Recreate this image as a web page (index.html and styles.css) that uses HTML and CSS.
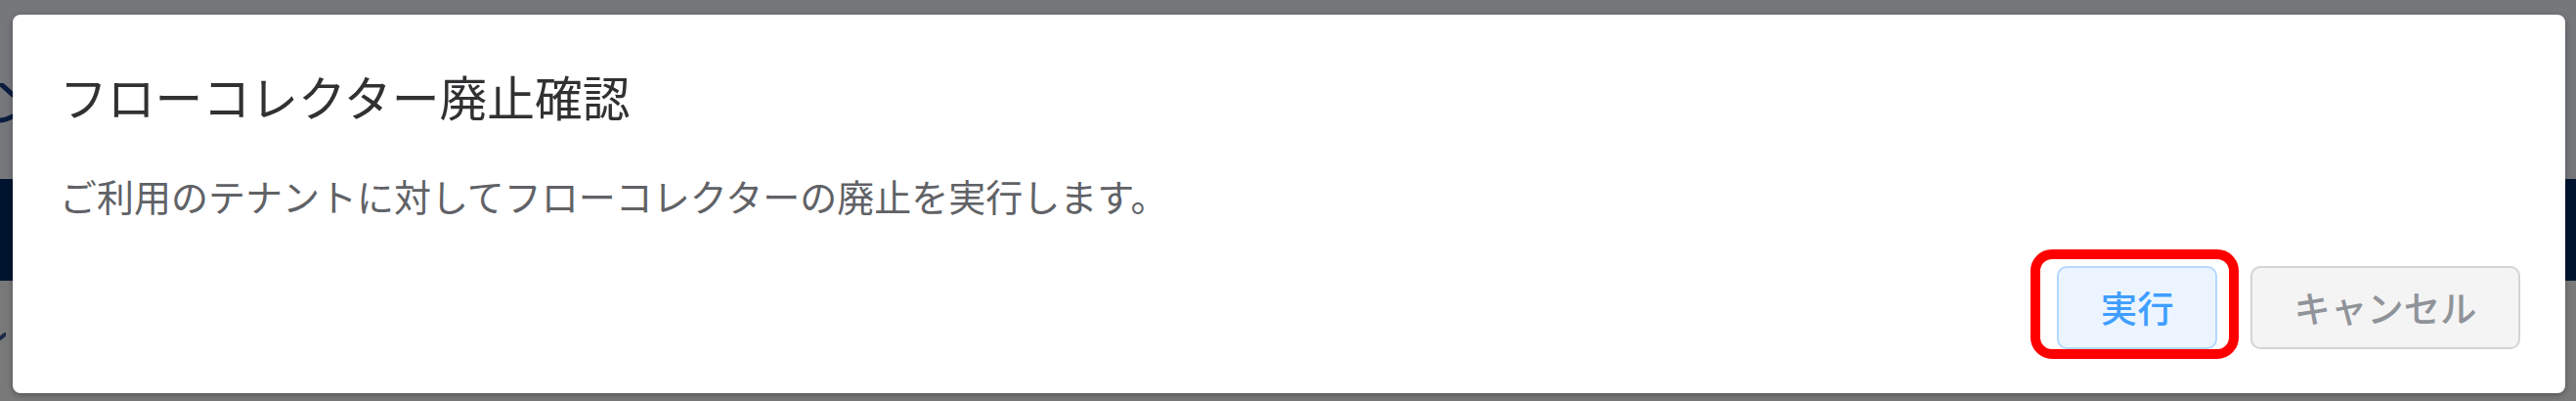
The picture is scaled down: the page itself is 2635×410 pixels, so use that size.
FILE: index.html
```html
<!DOCTYPE html>
<html lang="ja">
<head>
<meta charset="utf-8">
<title>フローコレクター廃止確認</title>
<link rel="stylesheet" href="styles.css">
</head>
<body>
<div class="screen">
  <div class="app">
    <div class="app-top">
      <svg class="frag" width="13" height="42" viewBox="0 0 13 42"><path d="M1 1 L13 12" stroke="#0b1d3f" stroke-width="5" fill="none" stroke-linecap="round"/><path d="M0 38 Q6 38 13 34" stroke="#0b1d3f" stroke-width="5" fill="none" stroke-linecap="round"/></svg>
    </div>
    <div class="app-band"></div>
    <div class="app-bottom">
      <svg class="frag" width="6" height="8" viewBox="0 0 6 8"><path d="M0 6 L5 2" stroke="#1b2a48" stroke-width="4" fill="none" stroke-linecap="round"/></svg>
    </div>
  </div>
  <div class="dialog">
    <div class="dialog-title">フローコレクター廃止確認</div>
    <div class="dialog-body">ご利用のテナントに対してフローコレクターの廃止を実行します。</div>
    <div class="dialog-footer">
      <div class="btn-wrap">
        <button class="btn btn-primary">実行</button>
        <span class="highlight"></span>
      </div>
      <button class="btn btn-info">キャンセル</button>
    </div>
  </div>
</div>
</body>
</html>
```

FILE: styles.css
```css
html, body {
  margin: 0;
  padding: 0;
}
body {
  width: 2635px;
  height: 410px;
  overflow: hidden;
  font-family: "Noto Sans CJK JP", "Noto Sans", sans-serif;
}
.screen {
  position: relative;
  width: 2635px;
  height: 410px;
}
.app {
  display: flex;
  flex-direction: column;
  height: 100%;
}
.app-top {
  height: 183px;
  box-sizing: border-box;
  padding-top: 85px;
  background: #76777b;
}
.app-band {
  height: 104px;
  background: #00132f;
}
.app-bottom {
  flex: 1;
  box-sizing: border-box;
  padding-top: 53px;
  background: #797979;
}
.frag {
  display: block;
}
.dialog {
  position: absolute;
  left: 13px;
  top: 15px;
  width: 2611px;
  height: 387px;
  box-sizing: border-box;
  padding: 50.5px 46px 45px 48px;
  background: #ffffff;
  border-radius: 8px;
  box-shadow: 0 2px 6px rgba(0, 0, 0, 0.3);
  display: flex;
  flex-direction: column;
}
.dialog-title {
  font-size: 48.8px;
  line-height: 64px;
  color: #303133;
  white-space: nowrap;
}
.dialog-body {
  margin-top: 45.5px;
  font-size: 38px;
  line-height: 50px;
  color: #606266;
  white-space: nowrap;
}
.dialog-footer {
  margin-top: 47px;
  display: flex;
  justify-content: flex-end;
  gap: 34px;
}
.btn-wrap {
  position: relative;
  display: flex;
}
.btn {
  height: 85px;
  box-sizing: border-box;
  padding: 0 42.5px;
  border: 2px solid;
  border-radius: 10px;
  font-family: "Noto Sans CJK JP", "Noto Sans", sans-serif;
  font-size: 37.4px;
  font-weight: 500;
  line-height: 1;
  white-space: nowrap;
  cursor: pointer;
}
.btn-primary {
  color: #409eff;
  background: #ecf5ff;
  border-color: #b3d8ff;
}
.btn-info {
  color: #909399;
  background: #f4f4f5;
  border-color: #d3d4d6;
}
.highlight {
  position: absolute;
  left: -27px;
  top: -17px;
  right: -22px;
  bottom: -10px;
  border: 10px solid #ff0000;
  border-radius: 22px;
  pointer-events: none;
}
```
